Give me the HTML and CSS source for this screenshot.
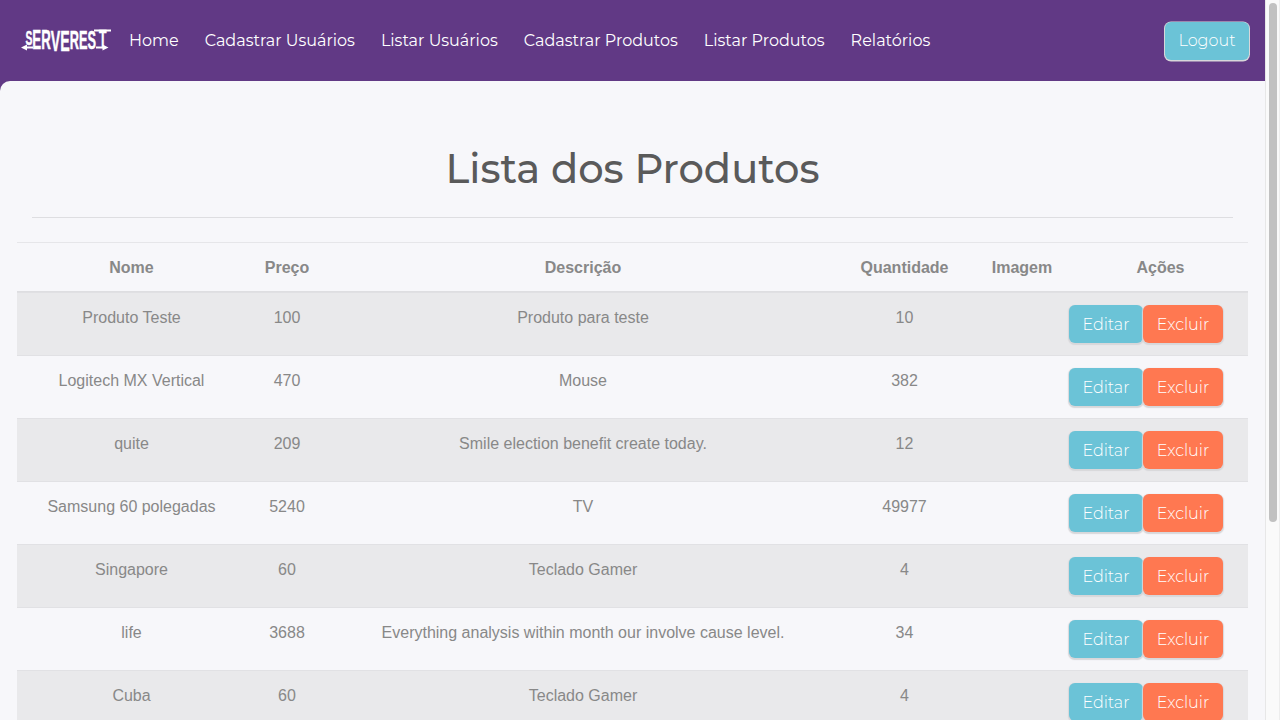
FILE: index.html
```html
<!DOCTYPE html>
<html lang="pt-BR">
<head>
<meta charset="utf-8">
<title>Lista dos Produtos</title>
<link rel="stylesheet" href="styles.css">
</head>
<body>
<div class="page">
<div class="content">
<nav class="navbar">
<svg class="logo" viewBox="0 0 92 28" role="img" aria-label="Serverest">
<text transform="translate(4.5 0) scale(.49 1)" y="17.5" class="wordmark"><tspan font-size="21">S</tspan><tspan y="22" font-size="27">ER</tspan><tspan y="24" font-size="29">VE</tspan><tspan y="22" font-size="26">RES</tspan><tspan x="150" y="21" font-size="25">T</tspan></text>
<path d="M73 2.600h17v2H73zM0 20.500l6-3v2h6v2H6v2zM87.500 20.500l-6-3v2H75v2h6.500v2z" fill="#fff"/>
</svg>
<div class="links">
<a class="link">Home</a>
<a class="link">Cadastrar Usuários</a>
<a class="link">Listar Usuários</a>
<a class="link">Cadastrar Produtos</a>
<a class="link">Listar Produtos</a>
<a class="link">Relatórios</a>
</div>
<button class="btn info logout">Logout</button>
</nav>
<main class="panel">
<h1 class="title">Lista dos Produtos</h1>
<hr class="rule">
<table class="table">
<colgroup><col class="c1"><col class="c2"><col class="c3"><col class="c4"><col class="c5"><col class="c6"></colgroup>
<thead><tr><th>Nome</th><th>Preço</th><th>Descrição</th><th>Quantidade</th><th>Imagem</th><th>Ações</th></tr></thead>
<tbody>
<tr><td>Produto Teste</td><td>100</td><td>Produto para teste</td><td>10</td><td></td><td><div class="actions"><button class="btn info edit">Editar</button><button class="btn danger">Excluir</button></div></td></tr>
<tr><td>Logitech MX Vertical</td><td>470</td><td>Mouse</td><td>382</td><td></td><td><div class="actions"><button class="btn info edit">Editar</button><button class="btn danger">Excluir</button></div></td></tr>
<tr><td>quite</td><td>209</td><td>Smile election benefit create today.</td><td>12</td><td></td><td><div class="actions"><button class="btn info edit">Editar</button><button class="btn danger">Excluir</button></div></td></tr>
<tr><td>Samsung 60 polegadas</td><td>5240</td><td>TV</td><td>49977</td><td></td><td><div class="actions"><button class="btn info edit">Editar</button><button class="btn danger">Excluir</button></div></td></tr>
<tr><td>Singapore</td><td>60</td><td>Teclado Gamer</td><td>4</td><td></td><td><div class="actions"><button class="btn info edit">Editar</button><button class="btn danger">Excluir</button></div></td></tr>
<tr><td>life</td><td>3688</td><td>Everything analysis within month our involve cause level.</td><td>34</td><td></td><td><div class="actions"><button class="btn info edit">Editar</button><button class="btn danger">Excluir</button></div></td></tr>
<tr><td>Cuba</td><td>60</td><td>Teclado Gamer</td><td>4</td><td></td><td><div class="actions"><button class="btn info edit">Editar</button><button class="btn danger">Excluir</button></div></td></tr>
</tbody>
</table>
</main>
</div>
<div class="scrollbar"><div class="thumb"></div></div>
</div>
</body>
</html>
```
FILE: styles.css
```css
* { box-sizing: border-box; }
body { margin: 0; overflow: hidden; font: 16px/24px Helvetica, "Liberation Sans", Arial, sans-serif; color: #888; }
.page { display: flex; height: 720px; overflow: hidden; }
.content { width: 1265px; height: 720px; overflow: hidden; background: #613985; }
.navbar { display: flex; align-items: center; height: 81px; padding: 0 15px 0 21px; }
.logo { width: 92px; height: 28px; margin-right: 16px; flex: none; overflow: visible; }
.wordmark { font-weight: 700; font-size: 26px; font-family: "Liberation Sans", Arial, sans-serif; fill: #fff; stroke: #fff; stroke-width: .5px; }
.links { display: flex; gap: 26px; }
.link { font: 400 16px/24px Montserrat, sans-serif; color: #fff; white-space: nowrap; }
.btn { height: 38px; padding: 0; border: 0; border-radius: 6px; font: 300 16px/38px Montserrat, sans-serif; color: #fff; box-shadow: 0 1px 1px .5px #d7d7da; }
.info { background: #6bc3d7; }
.danger { background: #ff7851; width: 80px; }
.edit { width: 74px; }
.actions .btn { padding-top: 1px; }
.logout { width: 84px; margin: 0 1px 0 auto; box-shadow: 0 .5px 0 1px #d7d7da; }
.panel { height: 640px; padding: 60px 17px 0; background: #f7f7fa; border-radius: 10px 0 0 0; }
.title { margin: 0; height: 56px; text-align: center; font: 500 40px/56px Montserrat, sans-serif; color: #5a5a5a; }
.rule { margin: 20px 15px 24px; border: 0; border-top: 1px solid #dedee1; }
.table { width: 1231px; table-layout: fixed; border-collapse: separate; border-spacing: 0; text-align: center; }
.c1 { width: 229px; }
.c2 { width: 82px; }
.c3 { width: 510px; }
.c4 { width: 133px; }
.c5 { width: 102px; }
.c6 { width: 175px; }
.table th { height: 50px; padding: 1px 0 0; border-top: 1px solid #e6e6e9; border-bottom: 1px solid #dedee1; }
.table td { height: 63px; padding: 13px 0 0; vertical-align: top; border-bottom: 1px solid #e1e1e4; }
.table tbody tr:first-child td { border-top: 1px solid #e0e0e3; height: 64px; }
.table tbody tr:nth-child(odd) { background: #e9e9eb; }
.actions { display: flex; margin: -1px 0 0 -4px; }
.scrollbar { width: 15px; height: 720px; padding: 3px 3px 0; background: #fafafa; border-left: 1px solid #e7e7e7; border-right: 1px solid #ededed; }
.thumb { width: 8px; height: 519px; border-radius: 4px; background: #c1c1c1; }
```
